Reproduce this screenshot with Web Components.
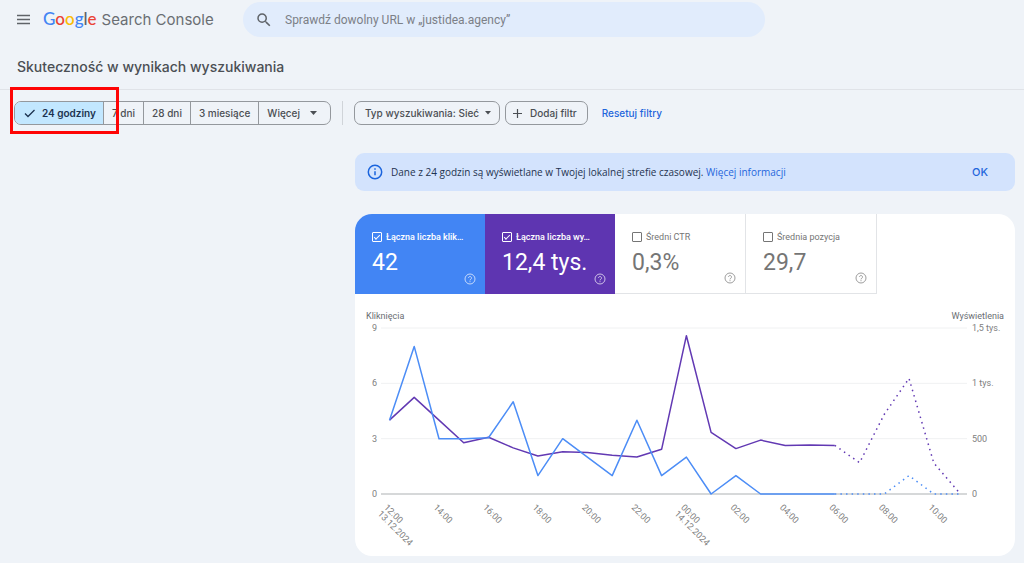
<!DOCTYPE html>
<html lang="pl">
<head>
<meta charset="utf-8">
<meta name="viewport" content="width=device-width, initial-scale=1">
<title>Google Search Console – Skuteczność</title>
<style>
  body { margin: 0; background: #eff3f8; font-family: Roboto, "Liberation Sans", sans-serif; color: #3c4043; }
</style>
</head>
<body>
<gsc-app></gsc-app>

<script>
const define = (name, html, setup) => {
  const tpl = document.createElement('template');
  tpl.innerHTML = html;
  customElements.define(name, class extends HTMLElement {
    connectedCallback() {
      if (this.shadowRoot) return;
      const root = this.attachShadow({ mode: 'open' });
      root.append(tpl.content.cloneNode(true));
      if (setup) setup(this, root);
    }
  });
};

/* Top bar: menu, product name, URL inspection box */
define('gsc-topbar', `
<style>
  :host { display: grid; grid-template-columns: 227px minmax(0, 522px); align-items: center; padding: 2px 16px 0; }
  .brand { display: flex; align-items: center; gap: 12px; }
  button { border: 0; padding: 0; background: none; display: flex; color: #5f6368; }
  a { display: flex; align-items: baseline; gap: 5px; text-decoration: none; color: #6a6e73; font: 400 15px/20px Inter, sans-serif; white-space: nowrap; }
  .google { font: 500 17px/20px Lato, sans-serif; }
  .b { color: #4285f4 } .r { color: #ea4335 } .y { color: #fbbc05 } .n { color: #5f6368 }
  form { display: flex; align-items: center; gap: 12px; height: 35px; border-radius: 18px; background: #e1ecfc; padding: 0 12px; color: #5f6368; }
  input { flex: 1; min-width: 0; border: 0; outline: 0; background: none; padding: 0; font: 400 12px/16px Roboto, sans-serif; color: #3c4043; }
  input::placeholder { color: #7c8087; opacity: 1; }
</style>
<div class="brand">
  <button aria-label="Menu"><svg width="15" height="15" viewBox="0 0 15 15"><path d="M1 3.5h13M1 7.5h13M1 11.5h13" stroke="currentColor" stroke-width="1.5"/></svg></button>
  <a href="#"><span class="google"><span class="b">G</span><span class="r">o</span><span class="y">o</span><span class="b">g</span><span class="n">l</span><span class="r">e</span></span><span>Search Console</span></a>
</div>
<form role="search">
  <svg width="18" height="18" viewBox="0 0 24 24"><path fill="currentColor" d="M15.5 14h-.79l-.28-.27A6.47 6.47 0 0 0 16 9.500 6.500 6.500 0 1 0 9.500 16c1.610 0 3.090-.59 4.230-1.570l.27.28v.79l5 4.990L20.490 19l-4.990-5zm-6 0C7.010 14 5 11.990 5 9.500S7.010 5 9.500 5 14 7.010 14 9.500 11.990 14 9.500 14z"/></svg>
  <input type="text" aria-label="Sprawdź URL" placeholder="Sprawdź dowolny URL w „justidea.agency”">
</form>`);

/* One cell of the date range group */
define('gsc-segment', `
<style>
  :host { display: flex; border-left: 1px solid #94989d; }
  :host(:first-child) { border-left: 0; }
  button { border: 0; margin: 0; padding: 0 8px; background: none; display: flex; align-items: center; gap: 10px; font: 500 10px/14px Inter, sans-serif; color: #4b4f54; white-space: nowrap; }
  :host([selected]) button { background: #c2e7ff; color: #1c3350; font-weight: 600; padding: 0 7px 0 8px; gap: 6px; }
  svg { display: none; }
  :host([selected]) .tick, :host([menu]) .arrow { display: block; }
  :host([menu]) button { padding-right: 13px; }
</style>
<button type="button">
  <svg class="tick" width="13" height="12" viewBox="0 0 13 12"><path d="M2 6.500l3 3L11.500 3" fill="none" stroke="currentColor" stroke-width="1.300"/></svg>
  <slot></slot>
  <svg class="arrow" width="7" height="4" viewBox="0 0 7 4"><path d="M0 0h7L3.500 4z" fill="currentColor"/></svg>
</button>`, (el, root) => {
  root.querySelector('button').setAttribute('aria-pressed', el.hasAttribute('selected'));
});

/* Stand-alone outlined filter chip */
define('gsc-chip', `
<style>
  :host { display: flex; }
  button { height: 24px; box-sizing: border-box; border: 1px solid #94989d; border-radius: 7px; margin: 0; padding: 0 8px 0 10px; background: none; display: flex; align-items: center; gap: 6px; font: 500 10px/14px Inter, sans-serif; color: #4b4f54; white-space: nowrap; }
  svg { display: none; }
  :host([menu]) .arrow, :host([add]) .plus { display: block; }
  :host([add]) button { padding: 0 10px 0 6px; gap: 7px; }
</style>
<button type="button">
  <svg class="plus" width="11" height="11" viewBox="0 0 11 11"><path d="M5.500 1v9M1 5.500h9" stroke="currentColor" stroke-width="1.200"/></svg>
  <slot></slot>
  <svg class="arrow" width="6" height="4" viewBox="0 0 6 4"><path d="M0 0h6L3 3.500z" fill="currentColor"/></svg>
</button>`);

define('gsc-filters', `
<style>
  :host { display: flex; align-items: center; padding: 11px 14px 0; }
  .range { position: relative; }
  .group { display: flex; height: 22px; border: 1px solid #94989d; border-radius: 7px; overflow: hidden; }
  .mark { position: absolute; inset: -14px auto -9px -4px; width: 103px; border: 3px solid #fe0505; pointer-events: none; }
  .rule { width: 1px; height: 24px; background: #d0d4d9; margin: 0 11px; }
  .chips { display: flex; gap: 5px; }
  a { margin-left: 14px; font: 500 10px/14px Inter, sans-serif; color: #1f66dc; text-decoration: none; white-space: nowrap; }
</style>
<div class="range">
  <div class="group" role="group" aria-label="Zakres dat">
    <gsc-segment selected>24 godziny</gsc-segment>
    <gsc-segment>7 dni</gsc-segment>
    <gsc-segment>28 dni</gsc-segment>
    <gsc-segment>3 miesiące</gsc-segment>
    <gsc-segment menu>Więcej</gsc-segment>
  </div>
  <div class="mark"></div>
</div>
<div class="rule"></div>
<div class="chips">
  <gsc-chip menu>Typ wyszukiwania: Sieć</gsc-chip>
  <gsc-chip add>Dodaj filtr</gsc-chip>
</div>
<a href="#">Resetuj filtry</a>`);

define('gsc-banner', `
<style>
  :host { display: flex; align-items: center; gap: 8px; height: 38px; padding: 0 27px 0 12px; border-radius: 9px; background: #d3e3fd; font: 400 10px/14px "Open Sans", sans-serif; color: #1f3350; }
  svg { flex: none; color: #1a64dd; }
  p { margin: 0; flex: 1; }
  a { color: #1f66dc; text-decoration: none; }
  button { border: 0; padding: 0; background: none; font: 500 11px/14px Inter, sans-serif; color: #1f66dc; }
</style>
<svg width="16" height="16" viewBox="0 0 16 16"><circle cx="8" cy="8" r="6.700" fill="none" stroke="currentColor" stroke-width="1.500"/><path d="M8 7.200v4M8 4.300v1.500" stroke="currentColor" stroke-width="1.500"/></svg>
<p><slot></slot> <a href="#">Więcej informacji</a></p>
<button type="button">OK</button>`);

/* Metric tile with a toggle */
define('gsc-metric', `
<style>
  :host { flex: 0 1 131px; min-width: 0; box-sizing: border-box; height: 80px; position: relative; display: block; padding: 17px 16px 0 17px; background: #fff; color: #757575; border-right: 1px solid #e2e4e7; border-bottom: 1px solid #e2e4e7; }
  :host([tone]) { flex-basis: 130px; color: #fff; border: 0; }
  :host([tone="blue"]) { background: #4285f4; }
  :host([tone="violet"]) { background: #5e35b1; }
  label { display: flex; align-items: center; gap: 4px; font: 400 9px/12px Roboto, sans-serif; white-space: nowrap; }
  :host([tone]) label { font-weight: 500; }
  input { appearance: none; flex: none; width: 10px; height: 10px; box-sizing: border-box; margin: 0; border: 1px solid currentColor; border-radius: 1px; color: inherit; display: grid; place-items: center; }
  input:checked::before { content: ""; width: 5px; height: 2px; border: solid currentColor; border-width: 0 0 1px 1px; transform: translateY(-1px) rotate(-45deg); }
  output { display: block; margin-top: 6px; font: 400 23px/28px Roboto, sans-serif; white-space: nowrap; }
  button { position: absolute; right: 9px; bottom: 9px; border: 0; padding: 0; background: none; color: inherit; display: flex; opacity: .7; }
</style>
<label><input type="checkbox"><slot></slot></label>
<output></output>
<button type="button" aria-label="Pomoc"><svg width="12" height="12" viewBox="0 0 12 12" fill="none" stroke="currentColor"><circle cx="6" cy="6" r="5"/><path d="M4.500 5a1.500 1.500 0 1 1 2.500 1.100C6.400 6.500 6 6.700 6 7.400M6 8.200v1"/></svg></button>`,
(el, root) => {
  root.querySelector('input').checked = el.hasAttribute('tone');
  root.querySelector('output').textContent = el.getAttribute('value');
});

/* Two-series hourly line chart */
define('gsc-chart', `
<style>
  :host { display: block; }
  svg { display: block; width: 100%; height: auto; }
  text { font: 400 9px Roboto, sans-serif; fill: #808080; }
  .title { fill: #6a6e73; }
  .end { text-anchor: end; }
  polyline { fill: none; stroke-width: 1.500; stroke-linejoin: round; }
  .clicks { stroke: #4c8df6; }
  .views { stroke: #6239b3; }
  .dotted { stroke-dasharray: 1.500 4.100; }
</style>
<svg viewBox="0 0 660 262" role="img" aria-label="Kliknięcia i wyświetlenia według godziny"></svg>`,
(el, root) => {
  const X0 = 34.5, STEP = 24.74, BASE = 200, TOP = 34, LEFT = 26, RIGHT = 612;
  const clicks = [4, 8, 3, 3, 3.05, 5, 1, 3, 2, 1, 4, 1, 2, 0, 1, 0, 0, 0, 0, 0, 0, 1, 0, 0];
  const views = [668, 873, 668, 463, 512, 417, 343, 382, 376, 350, 334, 404, 1430, 557, 410, 487, 438, 443, 439, 283, 720, 1045, 280, 20];
  const SOLID = 18;
  const x = i => X0 + i * STEP;
  const line = (cls, data, max) => {
    const pts = data.map((v, i) => x(i).toFixed(1) + ',' + (BASE - v / max * (BASE - TOP)).toFixed(1));
    return `<polyline class="${cls}" points="${pts.slice(0, SOLID + 1).join(' ')}"/>` +
           `<polyline class="${cls} dotted" points="${pts.slice(SOLID).join(' ')}"/>`;
  };
  const left = ['0', '3', '6', '9'], right = ['0', '500', '1 tys.', '1,5 tys.'];
  let out = '<text class="title" x="11" y="25">Kliknięcia</text><text class="title end" x="649" y="25">Wyświetlenia</text>';
  left.forEach((t, i) => {
    const y = BASE - i * (BASE - TOP) / 3;
    out += `<line x1="${LEFT}" x2="${RIGHT}" y1="${y}" y2="${y}" stroke="${i ? '#f0f1f2' : '#c9cbcd'}" stroke-width="${i ? 1 : 1.5}"/>` +
           `<text class="end" x="22" y="${y + 3}">${t}</text><text x="617" y="${y + 3}">${right[i]}</text>`;
  });
  out += line('views', views, 1500) + line('clicks', clicks, 9);
  ['12:00', '14:00', '16:00', '18:00', '20:00', '22:00', '00:00', '02:00', '04:00', '06:00', '08:00', '10:00'].forEach((t, i) => {
    const date = { 0: '13.12.2024', 6: '14.12.2024' }[i];
    out += `<g transform="translate(${(x(i * 2) - 6).toFixed(1)} 214) rotate(45)"><text>${t}</text>${date ? `<text y="9">${date}</text>` : ''}</g>`;
  });
  root.querySelector('svg').innerHTML = out;
});

define('gsc-card', `
<style>
  :host { display: block; background: #fff; border-radius: 17px; overflow: hidden; }
  .metrics { display: flex; }
</style>
<div class="metrics"><slot name="metrics"></slot></div>
<slot></slot>`);

define('gsc-app', `
<style>
  :host { display: block; padding-bottom: 7px; }
  h1 { margin: 0; padding: 20px 17px 12px; font: 500 14px/20px Inter, sans-serif; color: #4b4f54; border-bottom: 1px solid #e0e3e8; }
  main { display: grid; gap: 23px; margin: 28px 9px 0 355px; }
</style>
<header><gsc-topbar></gsc-topbar></header>
<h1>Skuteczność w wynikach wyszukiwania</h1>
<gsc-filters></gsc-filters>
<main>
  <gsc-banner>Dane z 24 godzin są wyświetlane w Twojej lokalnej strefie czasowej.</gsc-banner>
  <gsc-card>
    <gsc-metric slot="metrics" tone="blue" value="42">Łączna liczba klik…</gsc-metric>
    <gsc-metric slot="metrics" tone="violet" value="12,4 tys.">Łączna liczba wy…</gsc-metric>
    <gsc-metric slot="metrics" value="0,3%">Średni CTR</gsc-metric>
    <gsc-metric slot="metrics" value="29,7">Średnia pozycja</gsc-metric>
    <gsc-chart></gsc-chart>
  </gsc-card>
</main>`);
</script>
</body>
</html>
